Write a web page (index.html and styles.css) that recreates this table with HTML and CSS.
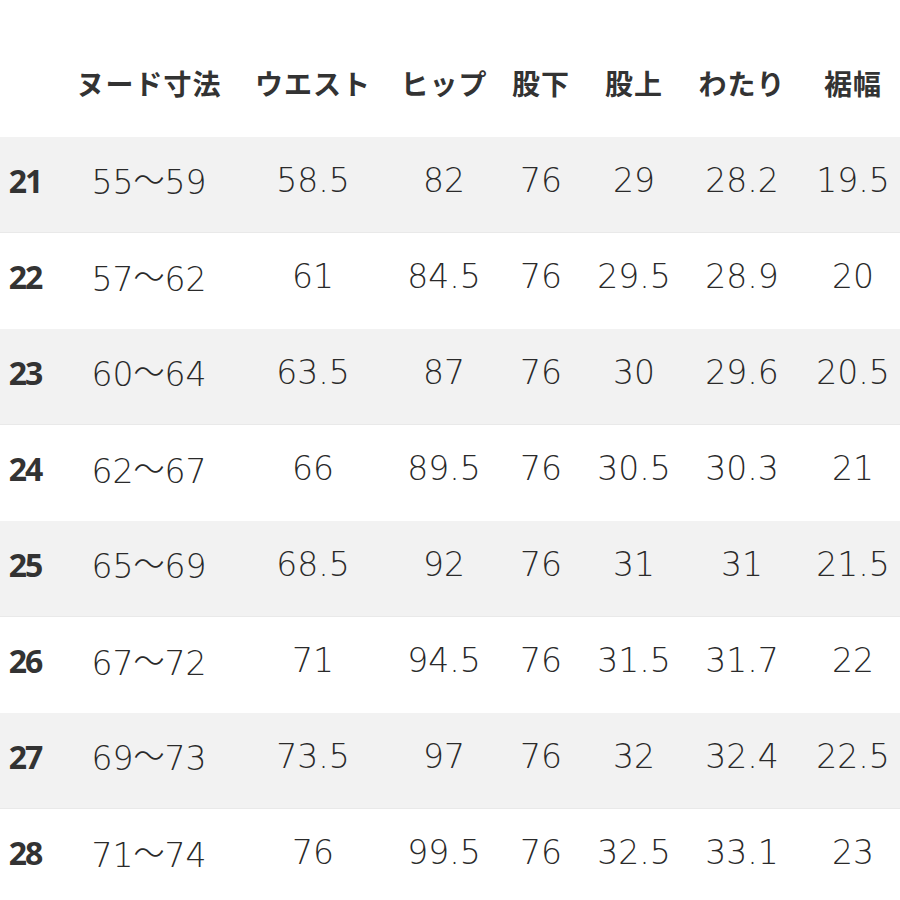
FILE: index.html
```html
<!DOCTYPE html>
<html lang="ja">
<head>
<meta charset="utf-8">
<link rel="stylesheet" href="styles.css">
</head>
<body>
<div class="table">
  <div class="row head">
    <div class="c"></div>
    <div class="c">ヌード寸法</div>
    <div class="c">ウエスト</div>
    <div class="c">ヒップ</div>
    <div class="c">股下</div>
    <div class="c">股上</div>
    <div class="c">わたり</div>
    <div class="c last">裾幅</div>
  </div>
  <div class="row grey"><div class="c n">21</div><div class="c">55<span class="w">〜</span>59</div><div class="c">58.5</div><div class="c">82</div><div class="c">76</div><div class="c">29</div><div class="c">28.2</div><div class="c last">19.5</div></div>
  <div class="row"><div class="c n">22</div><div class="c">57<span class="w">〜</span>62</div><div class="c">61</div><div class="c">84.5</div><div class="c">76</div><div class="c">29.5</div><div class="c">28.9</div><div class="c last">20</div></div>
  <div class="row grey"><div class="c n">23</div><div class="c">60<span class="w">〜</span>64</div><div class="c">63.5</div><div class="c">87</div><div class="c">76</div><div class="c">30</div><div class="c">29.6</div><div class="c last">20.5</div></div>
  <div class="row"><div class="c n">24</div><div class="c">62<span class="w">〜</span>67</div><div class="c">66</div><div class="c">89.5</div><div class="c">76</div><div class="c">30.5</div><div class="c">30.3</div><div class="c last">21</div></div>
  <div class="row grey"><div class="c n">25</div><div class="c">65<span class="w">〜</span>69</div><div class="c">68.5</div><div class="c">92</div><div class="c">76</div><div class="c">31</div><div class="c">31</div><div class="c last">21.5</div></div>
  <div class="row"><div class="c n">26</div><div class="c">67<span class="w">〜</span>72</div><div class="c">71</div><div class="c">94.5</div><div class="c">76</div><div class="c">31.5</div><div class="c">31.7</div><div class="c last">22</div></div>
  <div class="row grey"><div class="c n">27</div><div class="c">69<span class="w">〜</span>73</div><div class="c">73.5</div><div class="c">97</div><div class="c">76</div><div class="c">32</div><div class="c">32.4</div><div class="c last">22.5</div></div>
  <div class="row"><div class="c n">28</div><div class="c">71<span class="w">〜</span>74</div><div class="c">76</div><div class="c">99.5</div><div class="c">76</div><div class="c">32.5</div><div class="c">33.1</div><div class="c last">23</div></div>
</div>
</body>
</html>
```
FILE: styles.css
```css
html, body {
  margin: 0;
  padding: 0;
  background: #ffffff;
}
.table {
  width: 900px;
  color: #2a2a2a;
  font-family: "DejaVu Sans", "Noto Sans CJK JP", sans-serif;
}
.row {
  display: grid;
  grid-template-columns: 50px 198px 130px 132px 62px 124px 92px 112px;
  height: 96px;
  align-items: center;
  font-size: 33px;
  font-weight: 200;
  letter-spacing: 0;
  line-height: 40px;
}
.row > .c {
  padding-bottom: 8px;
}
.row.grey {
  background: #f2f2f2;
  border-bottom: 1px solid #e9e9e9;
  height: 95px;
}
.row.head {
  height: 137px;
  align-items: start;
  font-family: "Noto Sans CJK JP", sans-serif;
  font-weight: 700;
  font-size: 28px;
  letter-spacing: 1px;
  color: #333333;
}
.head .c {
  padding-top: 63px;
  padding-bottom: 0;
}
.c {
  text-align: center;
  white-space: nowrap;
}
.c.last {
  padding-left: 18px;
}
.w {
  font-family: "Noto Sans CJK JP", sans-serif;
  font-weight: 200;
  font-size: 31px;
  vertical-align: 3px;
}
.c.n {
  font-family: "Noto Sans", sans-serif;
  font-weight: 700;
  font-size: 32px;
  letter-spacing: -2px;
  color: #333333;
}
```
